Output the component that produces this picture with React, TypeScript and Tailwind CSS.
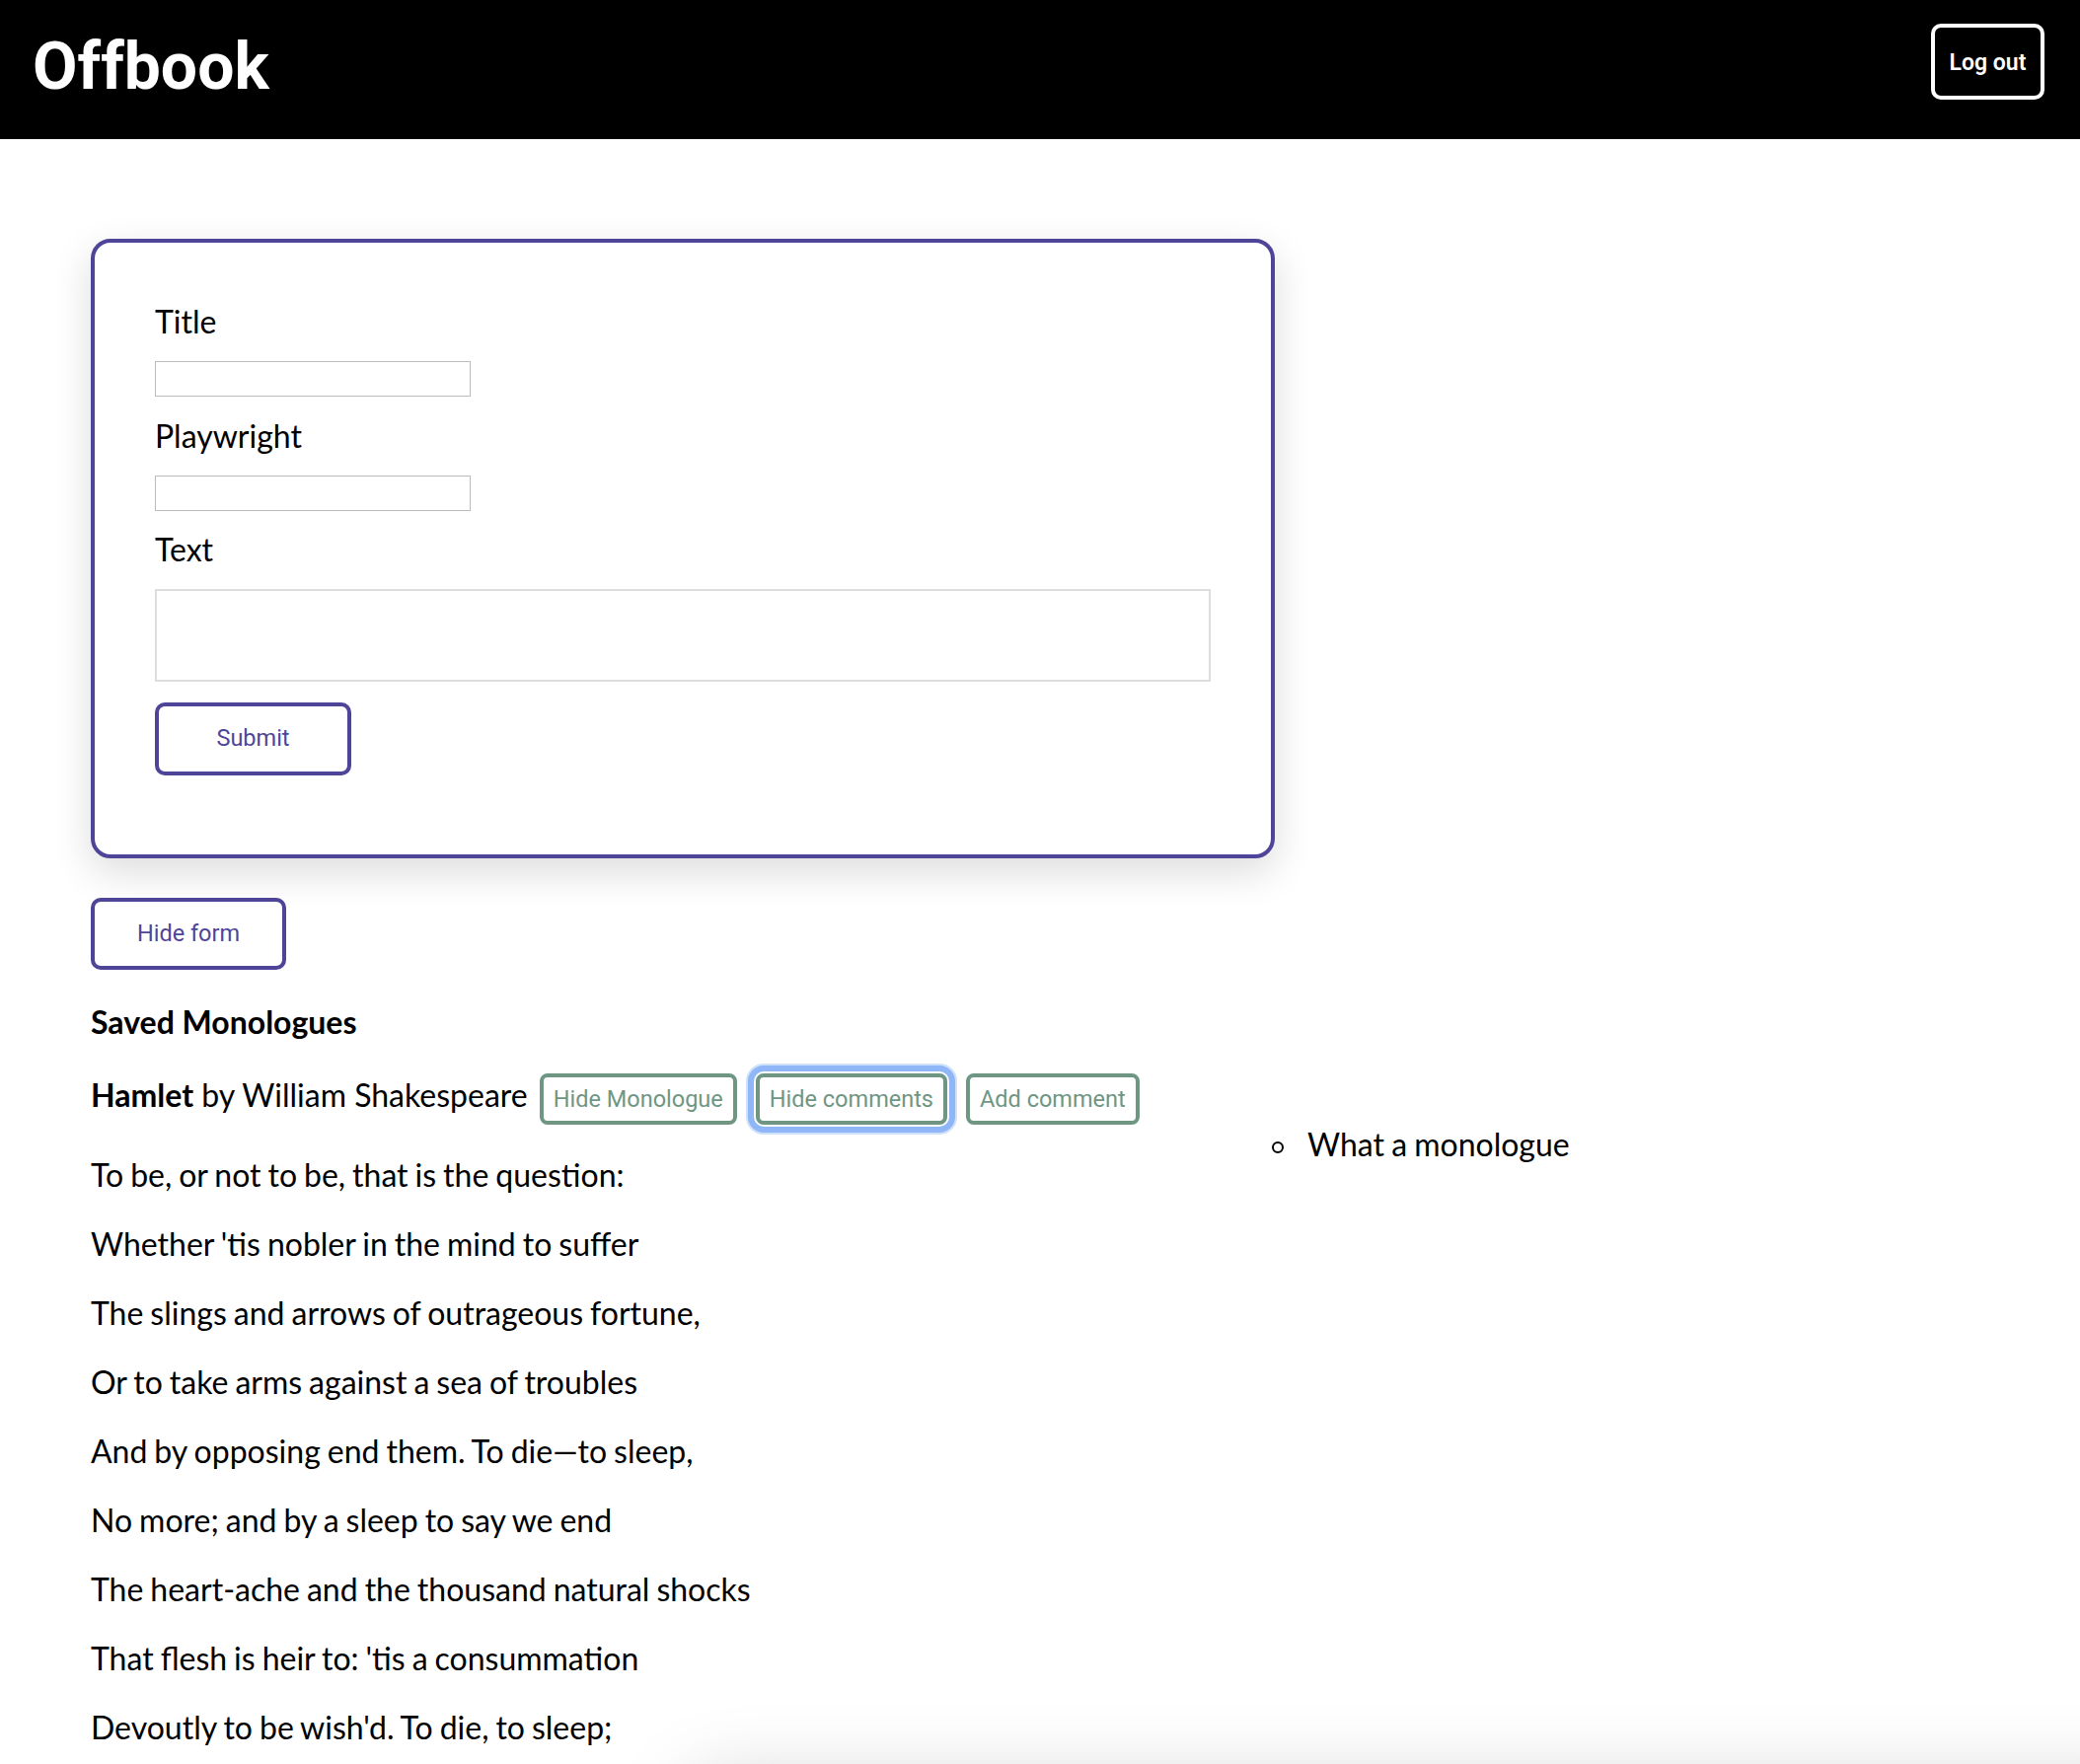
const lines = [
  "To be, or not to be, that is the question:",
  "Whether 'tis nobler in the mind to suffer",
  "The slings and arrows of outrageous fortune,",
  "Or to take arms against a sea of troubles",
  "And by opposing end them. To die\u2014to sleep,",
  "No more; and by a sleep to say we end",
  "The heart-ache and the thousand natural shocks",
  "That flesh is heir to: 'tis a consummation",
  "Devoutly to be wish'd. To die, to sleep;",
];

const Field = ({ label }: { label: string }) => (
  <>
    <label className="leading-[38.4px]">{label}</label>
    <input className="w-[320px] h-[36px] border border-[#bbbbbb] outline-none" />
  </>
);

const GreenButton = ({
  children,
  focused,
}: {
  children: string;
  focused?: boolean;
}) => (
  <button
    className={
      focused
        ? "h-[52px] px-[10px] inline-flex items-center border-4 border-[#6f9683] rounded-[8px] text-[#6f9683] text-[23.5px] leading-[27px] font-['Roboto',sans-serif] shadow-[0_0_0_2px_#ffffff,0_0_0_8px_#8fb6f6,0_0_0_10px_#cfe0fb]"
        : "h-[52px] px-[10px] inline-flex items-center border-4 border-[#6f9683] rounded-[8px] text-[#6f9683] text-[23.5px] leading-[27px] font-['Roboto',sans-serif]"
    }
  >
    {children}
  </button>
);

export default function App() {
  return (
    <div className="min-h-screen bg-white text-black font-['Lato',sans-serif] text-[32px] overflow-hidden">
      <header className="h-[141px] bg-black flex items-start justify-between">
        <h1 className="ml-[33px] mt-[35px] text-[66px] leading-none font-bold text-white font-['Roboto',sans-serif]">
          Offbook
        </h1>
        <button className="mt-[24px] mr-[36px] w-[115px] h-[77px] pt-[3px] border-4 border-white rounded-[10px] text-white text-[23px] font-semibold font-['Roboto',sans-serif]">
          Log out
        </button>
      </header>

      <main className="pl-[92px] pt-[101px]">
        <form className="w-[1200px] h-[628px] border-4 border-[#4f4598] rounded-[20px] px-[61px] pt-[61px] flex flex-col items-start gap-[20.6px] shadow-[0_14px_40px_rgba(0,0,0,0.14)]">
          <Field label="Title" />
          <Field label="Playwright" />
          <label className="leading-[38.4px]">Text</label>
          <textarea className="w-full h-[94px] border-2 border-[#dddddd] outline-none resize-none" />
          <button
            type="button"
            className="w-[199px] h-[74px] border-4 border-[#4f4598] rounded-[10px] text-[#4f4598] text-[23.5px] font-['Roboto',sans-serif]"
          >
            Submit
          </button>
        </form>

        <button className="mt-[40px] w-[198px] h-[73px] border-4 border-[#4f4598] rounded-[10px] text-[#4f4598] text-[23.5px] font-['Roboto',sans-serif]">
          Hide form
        </button>

        <p className="mt-[34px] leading-[38px] font-bold">Saved Monologues</p>

        <div className="mt-[33px] flex items-start">
          <div className="w-[1153px] shrink-0">
            <div className="flex items-baseline">
              <span className="leading-[38px] whitespace-nowrap">
                <b>Hamlet</b> by William Shakespeare
              </span>
              <div className="ml-[12px] flex items-baseline gap-[19px]">
                <GreenButton>Hide Monologue</GreenButton>
                <GreenButton focused>Hide comments</GreenButton>
                <GreenButton>Add comment</GreenButton>
              </div>
            </div>
            <div className="mt-[32px] flex flex-col gap-[32px]">
              {lines.map((line) => (
                <p
                  key={line}
                  className="leading-[38px] whitespace-nowrap [word-spacing:-1.2px]"
                >
                  {line}
                </p>
              ))}
            </div>
          </div>
          <ul className="mt-[53px] pl-[44px]">
            <li className="flex items-center gap-[24px] leading-[38px] [word-spacing:-1px]">
              <span className="mt-[6px] w-[12px] h-[12px] rounded-full border-2 border-black shrink-0" />
              What a monologue
            </li>
          </ul>
        </div>
      </main>

      {/* card below the fold, only its shadow shows */}
      <div className="fixed left-[700px] top-[1805px] w-[1500px] h-[400px] bg-white rounded-[20px] shadow-[0_0_80px_rgba(0,0,0,0.18)]" />
    </div>
  );
}
